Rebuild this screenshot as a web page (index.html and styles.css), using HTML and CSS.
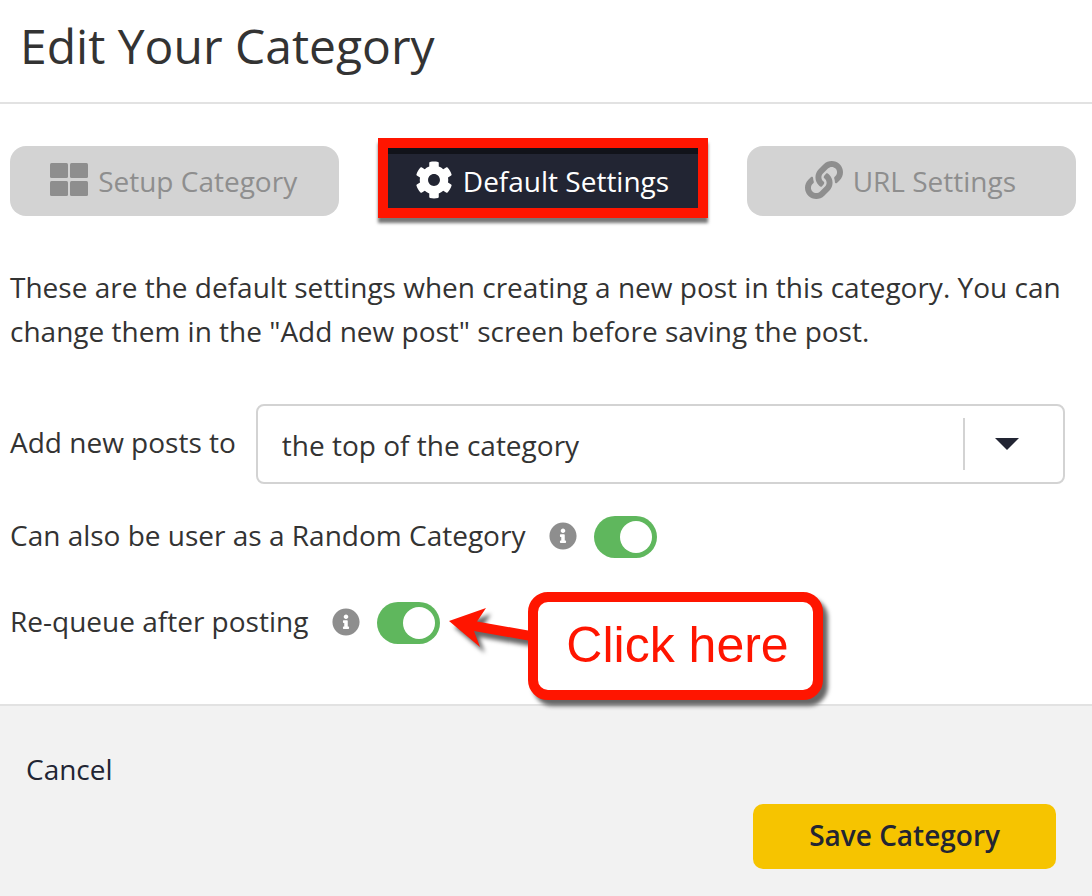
FILE: index.html
```html
<!DOCTYPE html>
<html lang="en">
<head>
<meta charset="utf-8">
<meta name="viewport" content="width=device-width, initial-scale=1">
<title>Edit Your Category</title>
<link rel="stylesheet" href="styles.css">
</head>
<body>
<form class="dialog">
  <header class="dialog-header">
    <h1 class="dialog-title">Edit Your Category</h1>
  </header>

  <main class="dialog-body">
    <nav class="tabs" aria-label="Category steps">
      <button class="tab" type="button">
        <svg class="tab-icon" viewBox="0 0 38 38" aria-hidden="true"><rect x="0" y="2" width="18" height="15" rx="1.5"/><rect x="20" y="2" width="18" height="15" rx="1.5"/><rect x="0" y="20" width="18" height="15" rx="1.5"/><rect x="20" y="20" width="18" height="15" rx="1.5"/></svg>
        <span>Setup Category</span>
      </button>
      <button class="tab tab-active" type="button" aria-current="step">
        <svg class="tab-icon" viewBox="0 0 512 512" aria-hidden="true"><path d="M487.4 315.7l-42.6-24.6c4.3-23.2 4.3-47 0-70.2l42.6-24.6c4.9-2.8 7.1-8.6 5.5-14-11.1-35.6-30-67.8-54.7-94.6-3.8-4.1-10-5.1-14.8-2.3L380.8 110c-17.9-15.4-38.5-27.3-60.8-35.1V25.8c0-5.6-3.9-10.5-9.4-11.7-36.7-8.2-74.3-7.8-109.2 0-5.5 1.2-9.4 6.1-9.4 11.7V75c-22.2 7.9-42.8 19.8-60.8 35.1L88.7 85.5c-4.9-2.8-11-1.9-14.8 2.3-24.7 26.7-43.6 58.9-54.7 94.6-1.7 5.4.6 11.2 5.5 14L67.3 221c-4.3 23.2-4.3 47 0 70.2l-42.6 24.6c-4.9 2.8-7.1 8.6-5.5 14 11.1 35.6 30 67.8 54.7 94.6 3.8 4.1 10 5.1 14.8 2.3l42.6-24.6c17.9 15.4 38.5 27.3 60.8 35.1v49.2c0 5.6 3.9 10.5 9.4 11.7 36.7 8.2 74.3 7.8 109.2 0 5.5-1.2 9.4-6.1 9.4-11.7v-49.2c22.2-7.9 42.8-19.8 60.8-35.1l42.6 24.6c4.9 2.8 11 1.9 14.8-2.3 24.7-26.7 43.6-58.9 54.7-94.6 1.5-5.5-.7-11.3-5.6-14.1zM256 336c-44.1 0-80-35.9-80-80s35.9-80 80-80 80 35.9 80 80-35.9 80-80 80z"/></svg>
        <span>Default Settings</span>
      </button>
      <button class="tab" type="button">
        <svg class="tab-icon" viewBox="0 0 512 512" aria-hidden="true"><path d="M326.612 185.391c59.747 59.809 58.927 155.698.36 214.59-.11.12-.24.25-.36.37l-67.2 67.2c-59.27 59.27-155.699 59.262-214.96 0-59.27-59.26-59.27-155.7 0-214.96l37.106-37.106c9.84-9.84 26.786-3.3 27.294 10.606.648 17.722 3.826 35.527 9.69 52.721 1.986 5.822.567 12.262-3.783 16.612l-13.087 13.087c-28.026 28.026-28.905 73.66-1.155 101.96 28.024 28.579 74.086 28.749 102.325.51l67.2-67.19c28.191-28.191 28.073-73.757 0-101.83-3.701-3.694-7.429-6.564-10.341-8.569a16.037 16.037 0 0 1-6.947-12.606c-.396-10.567 3.348-21.456 11.698-29.806l21.054-21.055c5.521-5.521 14.182-6.199 20.584-1.731a152.482 152.482 0 0 1 20.522 17.197zM467.547 44.449c-59.261-59.262-155.69-59.27-214.96 0l-67.2 67.2c-.12.12-.25.25-.36.37-58.566 58.892-59.387 154.781.36 214.59a152.454 152.454 0 0 0 20.521 17.196c6.402 4.468 15.064 3.789 20.584-1.731l21.054-21.055c8.35-8.35 12.094-19.239 11.698-29.806a16.037 16.037 0 0 0-6.947-12.606c-2.912-2.005-6.64-4.875-10.341-8.569-28.073-28.073-28.191-73.639 0-101.83l67.2-67.19c28.239-28.239 74.3-28.069 102.325.51 27.75 28.3 26.872 73.934-1.155 101.96l-13.087 13.087c-4.35 4.35-5.769 10.79-3.783 16.612 5.864 17.194 9.042 34.999 9.69 52.721.509 13.906 17.454 20.446 27.294 10.606l37.106-37.106c59.271-59.259 59.271-155.699.001-214.959z"/></svg>
        <span>URL Settings</span>
      </button>
    </nav>

    <p class="intro">These are the default settings when creating a new post in this category. You can change them in the "Add new post" screen before saving the post.</p>

    <div class="field">
      <label class="label" for="position">Add new posts to</label>
      <div class="select-box">
        <select id="position" class="select">
          <option>the top of the category</option>
          <option>the bottom of the category</option>
        </select>
        <span class="select-arrow" aria-hidden="true"><svg width="24" height="12" viewBox="0 0 24 12"><path d="M0 0h24L12 12z"/></svg></span>
      </div>
    </div>

    <div class="switch-row">
      <label class="label" for="random">Can also be user as a Random Category</label>
      <svg class="info" viewBox="0 0 512 512" aria-hidden="true"><path d="M256 8C119.043 8 8 119.083 8 256c0 136.997 111.043 248 248 248s248-111.003 248-248C504 119.083 392.957 8 256 8zm0 110c23.196 0 42 18.804 42 42s-18.804 42-42 42-42-18.804-42-42 18.804-42 42-42zm56 254c0 6.627-5.373 12-12 12h-88c-6.627 0-12-5.373-12-12v-24c0-6.627 5.373-12 12-12h12v-64h-12c-6.627 0-12-5.373-12-12v-24c0-6.627 5.373-12 12-12h64c6.627 0 12 5.373 12 12v100h12c6.627 0 12 5.373 12 12v24z"/></svg>
      <input id="random" class="switch" type="checkbox" role="switch" checked>
    </div>

    <div class="switch-row">
      <label class="label" for="requeue">Re-queue after posting</label>
      <svg class="info" viewBox="0 0 512 512" aria-hidden="true"><path d="M256 8C119.043 8 8 119.083 8 256c0 136.997 111.043 248 248 248s248-111.003 248-248C504 119.083 392.957 8 256 8zm0 110c23.196 0 42 18.804 42 42s-18.804 42-42 42-42-18.804-42-42 18.804-42 42-42zm56 254c0 6.627-5.373 12-12 12h-88c-6.627 0-12-5.373-12-12v-24c0-6.627 5.373-12 12-12h12v-64h-12c-6.627 0-12-5.373-12-12v-24c0-6.627 5.373-12 12-12h64c6.627 0 12 5.373 12 12v100h12c6.627 0 12 5.373 12 12v24z"/></svg>
      <input id="requeue" class="switch" type="checkbox" role="switch" checked>
      <div class="callout">
        <svg class="callout-arrow" width="82" height="42" viewBox="0 0 82 42" aria-hidden="true"><path d="M0 15L37 2L28 15.5L82 25V35L25 25L31 41z"/></svg>
        <span class="callout-text">Click here</span>
      </div>
    </div>
  </main>

  <footer class="dialog-footer">
    <button class="cancel" type="button">Cancel</button>
    <button class="save" type="submit">Save Category</button>
  </footer>
</form>
</body>
</html>
```
FILE: styles.css
```css
* {
  box-sizing: border-box;
}

body {
  margin: 0;
  background: #fff;
  color: #333;
  font: 28px/44px "Open Sans", "Noto Sans", sans-serif;
}

button,
select {
  margin: 0;
  color: inherit;
  font: inherit;
}

.dialog {
  display: flex;
  flex-direction: column;
  min-height: 100vh;
}

.dialog-header {
  padding: 10px 20px 20px;
  border-bottom: 2px solid #e2e2e2;
}

.dialog-title {
  margin: 0;
  font-size: 48px;
  font-weight: 400;
  line-height: 72px;
}

.dialog-body {
  padding: 42px 16px 59px 10px;
}

.tabs {
  display: grid;
  grid-template-columns: repeat(3, 1fr);
  gap: 39px;
}

.tab {
  display: flex;
  align-items: center;
  justify-content: center;
  gap: 10px;
  height: 70px;
  padding: 0 2px 0 0;
  border: 0;
  border-radius: 16px;
  background: #d3d3d3;
  color: #8e8e8e;
  white-space: nowrap;
}

.tab-icon {
  width: 38px;
  height: 38px;
  margin-bottom: 2px;
  fill: currentColor;
}

.tab-active {
  position: relative;
  border-radius: 0;
  background: linear-gradient(#11131a 8px, #222533 8px);
  color: #fff;
}

/* Highlight frame drawn over the active tab */
.tab-active::after {
  content: "";
  position: absolute;
  inset: -8px 0 -2px;
  border: 10px solid #ff1500;
  box-shadow: 0 5px 3px #777;
}

.intro {
  margin: 49px 0 51px;
}

.label {
  padding-bottom: 4px;
  line-height: 40px;
}

.field {
  display: flex;
  align-items: center;
  gap: 20px;
  padding-right: 11px;
}

.select-box {
  position: relative;
  flex: 1;
}

.select {
  appearance: none;
  width: 100%;
  height: 80px;
  padding: 2px 110px 0 24px;
  border: 2px solid #d3d3d3;
  border-radius: 8px;
  background: #fff;
}

.select-arrow {
  position: absolute;
  inset: 14px 2px 14px auto;
  display: flex;
  align-items: center;
  width: 100px;
  padding-left: 30px;
  border-left: 2px solid #d3d3d3;
  fill: #222533;
  pointer-events: none;
}

.switch-row {
  position: relative;
  display: flex;
  align-items: center;
  width: max-content;
  margin-top: 31px;
}

.switch-row + .switch-row {
  margin-top: 42px;
}

.info {
  width: 28px;
  height: 28px;
  margin: 0 17px 2px 24px;
  fill: #8e8e8e;
}

.switch {
  appearance: none;
  display: flex;
  align-items: center;
  justify-content: flex-end;
  width: 63px;
  height: 42px;
  margin: 0;
  padding: 5px;
  border-radius: 21px;
  background: #5fb75d;
}

.switch::before {
  content: "";
  width: 32px;
  height: 32px;
  border-radius: 50%;
  background: #fff;
}

.switch:not(:checked) {
  justify-content: flex-start;
  background: #bbb;
}

.callout {
  position: absolute;
  top: -9px;
  left: calc(100% + 9px);
  display: flex;
  align-items: flex-start;
  filter: drop-shadow(5px 6px 2px #666);
}

.callout-arrow {
  margin: 14px -3px 0 0;
  fill: #ff1500;
}

.callout-text {
  padding: 14px 24px 16px 28px;
  border: 10px solid #ff1500;
  border-radius: 20px;
  background: #fff;
  color: #ff1500;
  font: 50px/58px "Liberation Sans", Arial, sans-serif;
  white-space: nowrap;
}

.dialog-footer {
  display: flex;
  flex: 1;
  flex-direction: column;
  align-items: flex-start;
  gap: 13px;
  padding: 41px 36px 26px 26px;
  border-top: 2px solid #e2e2e2;
  background: #f2f2f2;
  color: #222533;
}

.cancel {
  padding: 0;
  border: 0;
  background: none;
}

.save {
  align-self: flex-end;
  padding: 9px 56px 12px;
  border: 0;
  border-radius: 10px;
  background: #f6c400;
  font-weight: 600;
}
```
